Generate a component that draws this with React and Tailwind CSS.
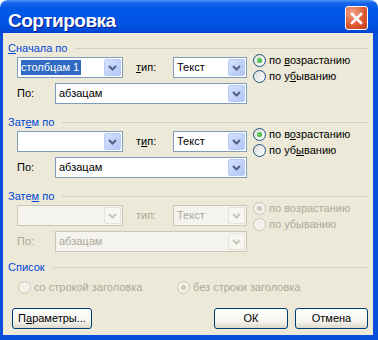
import clsx from 'clsx'

function U({ children }) {
  return <span className="underline decoration-1 underline-offset-[1px]">{children}</span>
}

function Chevron({ disabled }) {
  return (
    <svg width="9" height="6" viewBox="0 0 9 6">
      <path d="M1 1 L4.5 4.5 L8 1" fill="none" stroke={disabled ? '#c9c7ba' : '#4d6185'} strokeWidth="2" />
    </svg>
  )
}

function Combo({ className, value, selected, disabled }) {
  return (
    <div
      className={clsx(
        'flex h-[21px] shrink-0 border p-px',
        disabled ? 'border-[#c9c7ba] bg-[#f4f3ee]' : 'border-[#7f9db9] bg-white',
        className
      )}
    >
      <div className="flex min-w-0 flex-1 items-center pl-[2px]">
        {value && (
          <span
            className={clsx(
              'whitespace-nowrap pr-[2px] leading-[15px]',
              selected && 'bg-[#316ac5] text-white',
              disabled && 'text-[#aca899]'
            )}
          >
            {value}
          </span>
        )}
      </div>
      <div
        className={clsx(
          'flex w-[17px] items-center justify-center rounded-[2px] border',
          disabled
            ? 'border-[#e5e3d8] bg-[#f7f6f1]'
            : 'border-[#b9ccf5] bg-[linear-gradient(135deg,#d6e2fc,#b1c5f6)]'
        )}
      >
        <Chevron disabled={disabled} />
      </div>
    </div>
  )
}

function Radio({ checked, disabled, children, className }) {
  return (
    <div className={clsx('flex h-[16px] items-center', className)}>
      <span
        className={clsx(
          'flex h-[13px] w-[13px] shrink-0 items-center justify-center rounded-full border',
          disabled
            ? 'border-[#cac8bb] bg-[#f2f1ea]'
            : 'border-[#1c5180] bg-[linear-gradient(135deg,#dcdcd7,#ffffff)]'
        )}
      >
        {checked && (
          <span
            className={clsx(
              'h-[5px] w-[5px] rounded-full',
              disabled ? 'bg-[#cac8bb]' : 'bg-[radial-gradient(circle_at_40%_40%,#72d672,#21a121)]'
            )}
          />
        )}
      </span>
      <span className={clsx('ml-[3px] whitespace-nowrap', disabled && 'text-[#aca899]')}>{children}</span>
    </div>
  )
}

function GroupLabel({ children }) {
  return (
    <div className="flex h-[14px] items-center px-[5px]">
      <span className="whitespace-nowrap leading-[14px] text-[#0046d5]">{children}</span>
      <div className="ml-[8px] h-px flex-1 bg-[#d0d0bf]" />
    </div>
  )
}

function SortSection({ label, first, selected, tip, asc, desc, disabled, className }) {
  const muted = disabled && 'text-[#aca899]'
  return (
    <div className={className}>
      <GroupLabel>{label}</GroupLabel>
      <div className="mt-[2px] flex pl-[14px]">
        <div className="flex flex-col">
          <div className="flex items-center">
            <Combo className="w-[106px]" value={first} selected={selected} disabled={disabled} />
            <span className={clsx('ml-[13px] w-[37px]', muted)}>{tip}:</span>
            <Combo className="w-[74px]" value="Текст" disabled={disabled} />
          </div>
          <div className="mt-[5px] flex items-center">
            <span className={clsx('w-[38px]', muted)}>По:</span>
            <Combo className="w-[192px]" value="абзацам" disabled={disabled} />
          </div>
        </div>
        <div className="-mt-[5px] ml-[6px] flex flex-col">
          <Radio checked disabled={disabled}>{asc}</Radio>
          <Radio disabled={disabled}>{desc}</Radio>
        </div>
      </div>
    </div>
  )
}

function Btn({ className, children }) {
  return (
    <button
      className={clsx(
        'flex h-[21px] items-center justify-center rounded-[3px] border border-[#003c74] bg-[linear-gradient(to_bottom,#ffffff,#f5f4ef_65%,#dcd8ca)] leading-none text-black',
        className
      )}
    >
      {children}
    </button>
  )
}

function CloseBtn() {
  return (
    <div className="mt-[6px] flex h-[24px] w-[23px] items-center justify-center rounded-[3px] border border-white bg-[radial-gradient(circle_at_30%_25%,#f2a68a,#dd5a34_55%,#c23c1c)]">
      <svg width="13" height="13" viewBox="0 0 13 13">
        <path d="M2 2 L11 11 M11 2 L2 11" stroke="white" strokeWidth="2.6" strokeLinecap="square" />
      </svg>
    </div>
  )
}

export default function App() {
  return (
    <div className="flex h-[340px] w-[378px] flex-col font-['Liberation_Sans',sans-serif] text-[11px] text-black">
      <div className="flex h-[33px] shrink-0 items-start justify-between rounded-t-[8px] bg-[linear-gradient(to_bottom,#4a95f5_0px,#1664ea_3px,#0058e6_8px,#0055e5_55%,#004fdc_85%,#0046cf_100%)] pl-[8px] pr-[10px]">
        <span className="mt-[11px] text-[19px] font-bold leading-[19px] tracking-[-0.5px] text-white [text-shadow:1px_1px_0_#0a1a8c]">
          Сортировка
        </span>
        <CloseBtn />
      </div>

      <div className="flex flex-1 flex-col border-b-[5px] border-l-[3px] border-r-[5px] border-[#0a4fdc] bg-[#ece9d8]">
        <SortSection
          className="mt-[8px]"
          label={<><U>С</U>начала по</>}
          first="столбцам 1"
          selected
          tip={<><U>т</U>ип</>}
          asc={<>по <U>в</U>озрастанию</>}
          desc={<>по у<U>б</U>ыванию</>}
        />
        <SortSection
          className="mt-[11px]"
          label={<>Зат<U>е</U>м по</>}
          tip={<>т<U>и</U>п</>}
          asc={<>по в<U>о</U>зрастанию</>}
          desc={<>по уб<U>ы</U>ванию</>}
        />
        <SortSection
          className="mt-[11px]"
          label={<>Зате<U>м</U> по</>}
          tip="тип"
          asc="по возрастанию"
          desc="по убыванию"
          disabled
        />

        <div className="mt-[8px]">
          <GroupLabel>Список</GroupLabel>
        </div>
        <div className="mt-[5px] flex pl-[15px]">
          <Radio disabled className="w-[159px]">со строкой заголовка</Radio>
          <Radio disabled checked>без строки заголовка</Radio>
        </div>

        <div className="mt-[13px] flex items-center pl-[9px] pr-[5px]">
          <Btn className="w-[80px]">П<U>а</U>раметры...</Btn>
          <div className="flex-1" />
          <Btn className="w-[74px]">ОК</Btn>
          <Btn className="ml-[7px] w-[73px]">Отмена</Btn>
        </div>
      </div>
    </div>
  )
}
